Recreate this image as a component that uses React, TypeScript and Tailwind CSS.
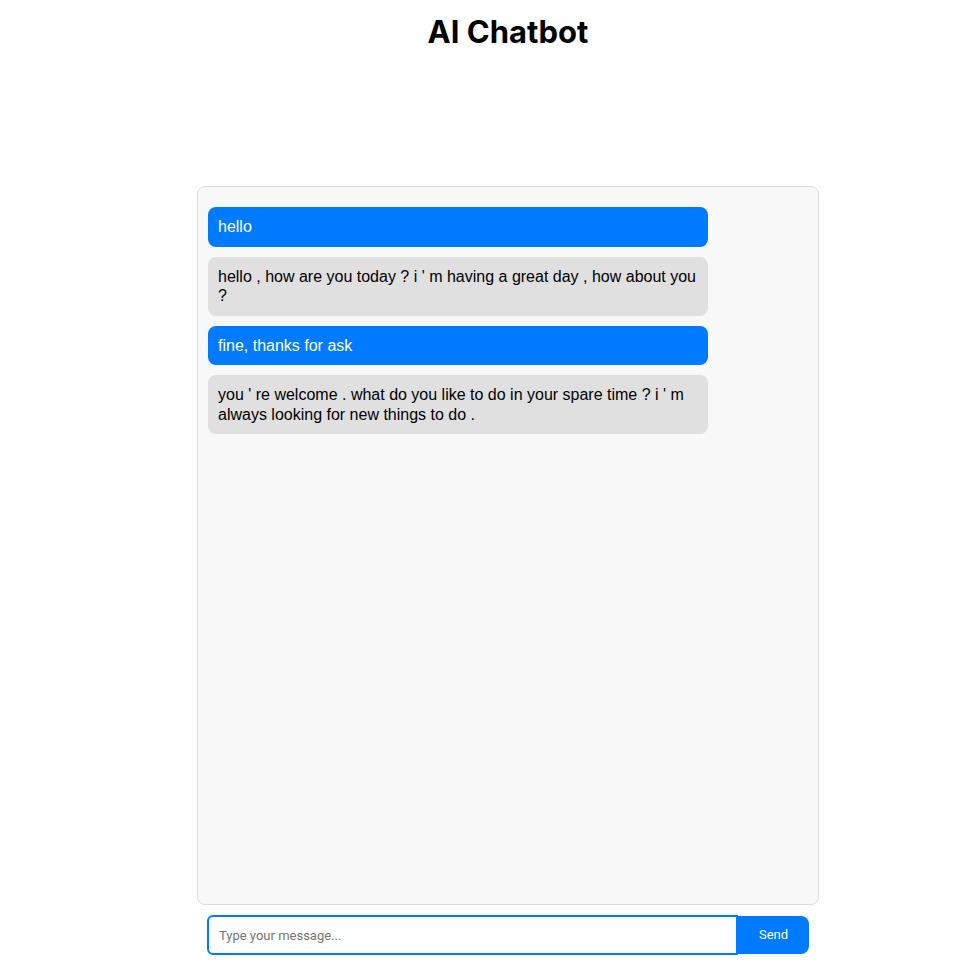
import { useState } from "react";

type Message = { from: "user" | "bot"; text: string };

const initialMessages: Message[] = [
    { from: "user", text: "hello" },
    { from: "bot", text: "hello , how are you today ? i ' m having a great day , how about you ?" },
    { from: "user", text: "fine, thanks for ask" },
    { from: "bot", text: "you ' re welcome . what do you like to do in your spare time ? i ' m always looking for new things to do ." },
];

export default function App() {
    const [messages] = useState<Message[]>(initialMessages);
    const [input, setInput] = useState("");

    return (
        <div className="min-h-screen bg-white">
            <div className="ml-[197px] w-[622px] flex flex-col">
                <h1 className="mt-3 text-center text-[31px] leading-[40px] font-bold text-black font-['Inter',sans-serif]">
                    AI Chatbot
                </h1>
                <div className="mt-[134px] h-[719px] border border-[#dddddd] rounded-lg bg-[#f8f8f8] px-2.5 pt-5 flex flex-col gap-2.5 overflow-y-auto">
                    {messages.map((m, i) => (
                        <div
                            key={i}
                            className={
                                m.from === "user"
                                    ? "w-[500px] rounded-lg bg-[#007bff] text-white px-2.5 py-2.5 text-base leading-[19.5px] font-['Liberation_Sans',Arial,sans-serif]"
                                    : "w-[500px] rounded-lg bg-[#e0e0e0] text-black px-2.5 py-2.5 text-base leading-[19.5px] font-['Liberation_Sans',Arial,sans-serif]"
                            }
                        >
                            {m.text}
                        </div>
                    ))}
                </div>
                <div className="mt-2.5 px-2.5 flex items-center">
                    <input
                        value={input}
                        onChange={(e) => setInput(e.target.value)}
                        placeholder="Type your message..."
                        className="flex-1 h-10 border-2 border-[#007bff] rounded-l-md px-2.5 text-[13px] outline-none bg-white font-['Roboto',sans-serif] placeholder:text-[#757575]"
                    />
                    <button className="w-[71px] h-[38px] bg-[#007bff] text-white text-[13px] rounded-r-lg font-['Roboto',sans-serif]">
                        Send
                    </button>
                </div>
            </div>
        </div>
    );
}
